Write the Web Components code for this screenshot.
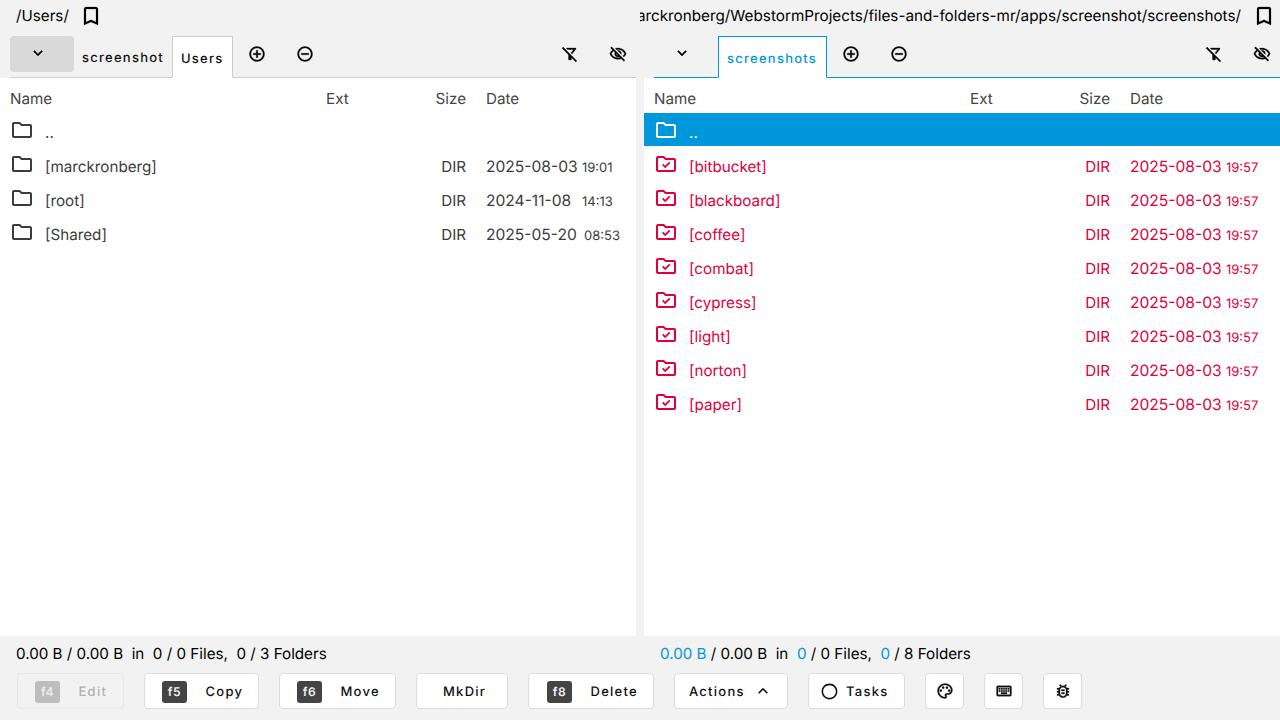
<!DOCTYPE html>
<html lang="en"><head><meta charset="utf-8"><title>Files and Folders</title>
<style>
html,body{margin:0;height:100%;overflow:hidden;background:#f2f2f2}
body{font:15.2px/24px Inter,"Liberation Sans",sans-serif;color:#000;text-rendering:geometricPrecision}
fm-app{--blue:#0098db;--red:#e0003c}
</style></head><body>
<fm-app>
  <fm-panel slot="left" side="left" path="/Users/">
    <fm-tab slot="tabs" plain>screenshot</fm-tab>
    <fm-tab slot="tabs" active>Users</fm-tab>
    <fm-row name=".." up></fm-row>
    <fm-row name="[marckronberg]" size="DIR" date="2025-08-03" time="19:01"></fm-row>
    <fm-row name="[root]" size="DIR" date="2024-11-08" time="14:13"></fm-row>
    <fm-row name="[Shared]" size="DIR" date="2025-05-20" time="08:53" tshift="2"></fm-row>
  </fm-panel>
  <fm-panel slot="right" side="right" focused path="/Users/marckronberg/WebstormProjects/files-and-folders-mr/apps/screenshot/screenshots/">
    <fm-tab slot="tabs" active focused>screenshots</fm-tab>
    <fm-row name=".." up selected></fm-row>
    <fm-row name="[bitbucket]" size="DIR" date="2025-08-03" time="19:57" marked></fm-row>
    <fm-row name="[blackboard]" size="DIR" date="2025-08-03" time="19:57" marked></fm-row>
    <fm-row name="[coffee]" size="DIR" date="2025-08-03" time="19:57" marked></fm-row>
    <fm-row name="[combat]" size="DIR" date="2025-08-03" time="19:57" marked></fm-row>
    <fm-row name="[cypress]" size="DIR" date="2025-08-03" time="19:57" marked></fm-row>
    <fm-row name="[light]" size="DIR" date="2025-08-03" time="19:57" marked></fm-row>
    <fm-row name="[norton]" size="DIR" date="2025-08-03" time="19:57" marked></fm-row>
    <fm-row name="[paper]" size="DIR" date="2025-08-03" time="19:57" marked></fm-row>
  </fm-panel>
  <fm-status slot="status-left" folders="3"></fm-status>
  <fm-status slot="status-right" folders="8" accent></fm-status>
  <fm-btn slot="buttons" key="f4" w="107" pad="17" disabled>Edit</fm-btn>
  <fm-btn slot="buttons" key="f5" w="115" pad="17">Copy</fm-btn>
  <fm-btn slot="buttons" key="f6" w="117" pad="17">Move</fm-btn>
  <fm-btn slot="buttons" w="92" pad="26">MkDir</fm-btn>
  <fm-btn slot="buttons" key="f8" w="126" pad="18">Delete</fm-btn>
  <fm-btn slot="buttons" w="114" pad="14" after="expand_less">Actions</fm-btn>
  <fm-btn slot="buttons" w="97" pad="10.5" before="circle">Tasks</fm-btn>
  <fm-btn slot="buttons" w="39" before="palette"></fm-btn>
  <fm-btn slot="buttons" w="39" before="keyboard"></fm-btn>
  <fm-btn slot="buttons" w="39" before="bug"></fm-btn>
</fm-app>
<script>
const ICONS={
 bookmark:'<path d="M17 3H7c-1.1 0-2 .9-2 2v16l7-3 7 3V5c0-1.1-.9-2-2-2zm0 15l-5-2.18L7 18V5h10v13z"/>',
 add:'<path d="M13 7h-2v4H7v2h4v4h2v-4h4v-2h-4V7zm-1-5C6.48 2 2 6.48 2 12s4.48 10 10 10 10-4.48 10-10S17.52 2 12 2zm0 18c-4.41 0-8-3.59-8-8s3.59-8 8-8 8 3.59 8 8-3.59 8-8 8z"/>',
 remove:'<path d="M7 11v2h10v-2H7zm5-9C6.48 2 2 6.48 2 12s4.48 10 10 10 10-4.48 10-10S17.52 2 12 2zm0 18c-4.41 0-8-3.59-8-8s3.59-8 8-8 8 3.59 8 8-3.59 8-8 8z"/>',
 expand_more:'<path d="M16.59 8.59 12 13.17 7.41 8.59 6 10l6 6 6-6z"/>',
 expand_less:'<path d="M12 8l-6 6 1.41 1.41L12 10.83l4.59 4.58L18 14z"/>',
 filter_off:'<path d="M16.95 6l-3.57 4.55 1.43 1.43c1.03-1.31 4.98-6.37 4.98-6.37C20.3 4.95 19.83 4 19 4H6.83l2 2h8.12zM2.81 2.81 1.39 4.22 10 13v6c0 .55.45 1 1 1h2c.55 0 1-.45 1-1v-2.17l5.78 5.78 1.41-1.41L2.81 2.81z"/>',
 eye_off:'<path d="M12 6c3.79 0 7.17 2.13 8.82 5.5-.59 1.22-1.42 2.27-2.41 3.12l1.41 1.41c1.39-1.23 2.49-2.77 3.18-4.53C21.27 7.11 17 4 12 4c-1.27 0-2.49.2-3.64.57l1.65 1.65C10.66 6.09 11.32 6 12 6zm-1.07 1.14L13 9.21c.57.25 1.03.71 1.28 1.28l2.07 2.07c.08-.34.14-.7.14-1.07C16.5 9.01 14.48 7 12 7c-.37 0-.72.05-1.07.14zM2.01 3.87l2.68 2.68C3.06 7.83 1.77 9.53 1 11.5 2.73 15.89 7 19 12 19c1.52 0 2.98-.29 4.32-.82l3.42 3.42 1.41-1.41L3.42 2.45 2.01 3.87zm7.5 7.5l2.61 2.61c-.04.01-.08.02-.12.02-1.38 0-2.5-1.12-2.5-2.5 0-.05.01-.08.01-.13zm-3.4-3.4l1.75 1.75c-.23.55-.36 1.15-.36 1.78 0 2.48 2.02 4.5 4.5 4.5.63 0 1.23-.13 1.77-.36l.98.98c-.88.24-1.8.38-2.75.38-3.79 0-7.17-2.13-8.82-5.5.7-1.43 1.72-2.61 2.93-3.53z"/>',
 folder:'<path d="M9.17 6l2 2H20v10H4V6h5.17M10 4H4c-1.1 0-1.99.9-1.99 2L2 18c0 1.1.9 2 2 2h16c1.1 0 2-.9 2-2V8c0-1.1-.9-2-2-2h-8l-2-2z"/>',
 folder_check:'<path d="M9.17 6l2 2H20v10H4V6h5.17M10 4H4c-1.1 0-1.99.9-1.99 2L2 18c0 1.1.9 2 2 2h16c1.1 0 2-.9 2-2V8c0-1.1-.9-2-2-2h-8l-2-2z"/><path d="M8 13.1l1.3-1.3 1.9 1.9 3.9-3.9 1.3 1.3-5.2 5.2z"/>',
 circle:'<path d="M12 2C6.48 2 2 6.48 2 12s4.48 10 10 10 10-4.48 10-10S17.52 2 12 2zm0 18c-4.42 0-8-3.58-8-8s3.58-8 8-8 8 3.58 8 8-3.58 8-8 8z"/>',
 palette:'<path d="M12 22C6.49 22 2 17.51 2 12S6.49 2 12 2s10 4.04 10 9c0 3.31-2.69 6-6 6h-1.77c-.28 0-.5.22-.5.5 0 .12.05.23.13.33.41.47.64 1.06.64 1.67 0 1.38-1.12 2.5-2.5 2.5zm0-18c-4.41 0-8 3.59-8 8s3.59 8 8 8c.28 0 .5-.22.5-.5 0-.16-.08-.28-.14-.35-.41-.46-.63-1.05-.63-1.65 0-1.38 1.12-2.5 2.5-2.5H16c2.21 0 4-1.79 4-4 0-3.86-3.59-7-8-7z"/><circle cx="6.5" cy="11.5" r="1.5"/><circle cx="9.5" cy="7.5" r="1.5"/><circle cx="14.5" cy="7.5" r="1.5"/><circle cx="17.5" cy="11.5" r="1.5"/>',
 keyboard:'<path d="M20 5H4c-1.1 0-1.99.9-1.99 2L2 17c0 1.1.9 2 2 2h16c1.1 0 2-.9 2-2V7c0-1.1-.9-2-2-2zm0 12H4V7h16v10zM11 8h2v2h-2zm0 3h2v2h-2zM8 8h2v2H8zm0 3h2v2H8zM5 11h2v2H5zm0-3h2v2H5zm3 6h8v2H8zm6-3h2v2h-2zm0-3h2v2h-2zm3 3h2v2h-2zm0-3h2v2h-2z"/>',
 bug:'<path d="M20 8h-2.81c-.45-.78-1.07-1.45-1.82-1.96L17 4.41 15.59 3l-2.17 2.17C12.96 5.06 12.49 5 12 5s-.96.06-1.41.17L8.41 3 7 4.41l1.62 1.63C7.88 6.55 7.26 7.22 6.81 8H4v2h2.09c-.05.33-.09.66-.09 1v1H4v2h2v1c0 .34.04.67.09 1H4v2h2.81c1.04 1.79 2.97 3 5.19 3s4.15-1.21 5.19-3H20v-2h-2.09c.05-.33.09-.66.09-1v-1h2v-2h-2v-1c0-.34-.04-.67-.09-1H20V8zm-4 4v3c0 .22-.03.47-.07.7l-.1.65-.37.65c-.72 1.24-2.04 2-3.46 2s-2.74-.77-3.46-2l-.37-.64-.1-.65C8.03 15.48 8 15.23 8 15v-4c0-.23.03-.48.07-.7l.1-.65.37-.65c.3-.52.72-.97 1.21-1.31l.57-.39.74-.18c.31-.08.63-.12.94-.12.32 0 .63.04.95.12l.68.16.61.42c.5.34.91.78 1.21 1.31l.38.65.1.65c.04.22.07.47.07.69v1zm-6 2h4v2h-4zm0-4h4v2h-4z"/>'
};
const svg=(n,s,w)=>`<svg part="icon" width="${s}" height="${s}" viewBox="0 0 24 24" fill="currentColor" ${w?`stroke="currentColor" stroke-width="${w}"`:''} style="display:block;flex:none">${ICONS[n]}</svg>`;
const esc=s=>String(s||'').replace(/&/g,'&amp;').replace(/</g,'&lt;');

class FmApp extends HTMLElement{
 constructor(){super();this.attachShadow({mode:'open'}).innerHTML=`<style>
 :host{display:flex;flex-direction:column;height:720px;width:1280px;overflow:hidden}
 .panels{flex:1;min-height:0;display:grid;grid-template-columns:640px 640px}
 .status{display:grid;grid-template-columns:640px 640px;height:37px;flex:none}
 .buttons{display:flex;gap:20px;padding:0 0 0 17px;height:47px;flex:none;box-sizing:border-box}
 </style>
 <div class="panels"><slot name="left"></slot><slot name="right"></slot></div>
 <div class="status"><slot name="status-left"></slot><slot name="status-right"></slot></div>
 <div class="buttons"><slot name="buttons"></slot></div>`;}
}
class FmPanel extends HTMLElement{
 constructor(){super();const r=this.attachShadow({mode:'open'});
  const right=this.getAttribute('side')==='right',f=this.hasAttribute('focused');
  r.innerHTML=`<style>
 :host{display:flex;flex-direction:column;min-width:0;min-height:0;overflow:hidden}
 .path{height:36px;flex:none;display:flex;align-items:flex-start;gap:${right?11:10}px;box-sizing:border-box;overflow:hidden;white-space:nowrap;
   padding:${right?'4px 4px 0 0':'4px 0 0 16px'};justify-content:${right?'flex-end':'flex-start'}}
 .path span{line-height:24px;flex:none;font-size:${right?'15.28px':'15.2px'}}
 .bar{height:42px;flex:none;box-sizing:border-box;display:flex;align-items:flex-start;
   margin-left:${right?'14px':'10px'};margin-right:${right?'0':'4px'};border-bottom:1px solid ${f?'var(--blue)':'#ccc'}}
 .dd{width:64px;height:36px;flex:none;display:flex;padding:8px 0 0 19px;box-sizing:border-box;border-radius:4px;${right?'':'background:#d9d9d9;'}}
 .tabs{display:flex;align-items:flex-start}
 .ib{width:48px;height:36px;flex:none;display:flex;align-items:center;justify-content:center}
 .sp{flex:1}
 .end{display:flex;margin-right:-6px}
 .list{flex:1;min-height:0;background:#fff;margin-${right?'left':'right'}:4px}
 </style>
 <div class="path"><span>${esc(this.getAttribute('path'))}</span>${svg('bookmark',24,.2)}</div>
 <div class="bar"><div class="dd">${svg('expand_more',18,.5)}</div><div class="tabs"><slot name="tabs"></slot></div>
  <div class="ib">${svg('add',18,.4)}</div><div class="ib">${svg('remove',18,.4)}</div><div class="sp"></div>
  <div class="end"><div class="ib">${svg('filter_off',18,.4)}</div><div class="ib">${svg('eye_off',18,.4)}</div></div></div>
 <div class="list"><fm-row header></fm-row><slot></slot></div>`;}
}
class FmTab extends HTMLElement{
 constructor(){super();const a=this.hasAttribute('active'),f=this.hasAttribute('focused');
  this.attachShadow({mode:'open'}).innerHTML=`<style>
 :host{display:block;height:42px;box-sizing:border-box;padding:10px ${f?'9px':'8px'} 0 8px;font:500 13px/24px Inter,sans-serif;letter-spacing:1.25px;white-space:nowrap;
  ${a?`background:#fff;border:1px solid ${f?'var(--blue)':'#ccc'};border-bottom-color:#fff;`:''}
  color:${f?'var(--blue)':'#111'}}
 </style><slot></slot>`;}
}
class FmRow extends HTMLElement{
 constructor(){super();const r=this.attachShadow({mode:'open'});
  const g=n=>this.getAttribute(n)||'';
  const hdr=this.hasAttribute('header'),sel=this.hasAttribute('selected'),m=this.hasAttribute('marked');
  const color=sel?'#fff':m?'var(--red)':'#3c3c3c';
  const common=`:host{display:grid;grid-template-columns:316px 100px 40px 170px;padding-left:10px;box-sizing:border-box;height:34px;color:${color};line-height:24px;white-space:nowrap}`;
  if(hdr){r.innerHTML=`<style>${common}
   div{padding-top:9px;color:#444}.s{text-align:right}.d{padding-left:20px}</style>
   <div>Name</div><div>Ext</div><div class="s">Size</div><div class="d">Date</div>`;return;}
  r.innerHTML=`<style>${common}
   :host{border-top:1px solid #fff;${sel?'background:var(--blue);':''}}
   .n{display:flex;gap:11px;padding-top:5px}.t{padding-top:3px}
   .s{text-align:right;padding-top:8px}.d{padding:8px 0 0 20px;display:flex}
   .dt{font-size:15.6px;width:96px;flex:none}
   small{font-size:13px;padding-top:1px;margin-left:${g('tshift')||0}px}</style>
   <div class="n">${svg(m?'folder_check':'folder',24)}<span class="t">${esc(g('name'))}</span></div><div></div>
   <div class="s">${esc(g('size'))}</div><div class="d">${g('date')?`<span class="dt">${esc(g('date'))}</span><small>${esc(g('time'))}</small>`:''}</div>`;}
}
class FmStatus extends HTMLElement{
 constructor(){super();const a=this.hasAttribute('accent');
  const z=s=>a?`<b>${s}</b>`:s;
  this.attachShadow({mode:'open'}).innerHTML=`<style>
 :host{display:block;padding:6px 0 0 ${a?'20px':'16px'};white-space:pre;line-height:24px}
 b{font-weight:400;color:var(--blue)}</style>${z('0.00 B')} / 0.00 B  in  ${z('0')} / 0 Files,  ${z('0')} / ${esc(this.getAttribute('folders'))} Folders`;}
}
class FmBtn extends HTMLElement{
 constructor(){super();const d=this.hasAttribute('disabled'),k=this.getAttribute('key'),b=this.getAttribute('before'),af=this.getAttribute('after'),p=this.getAttribute('pad');
  const ic=b==='circle'?svg(b,19):b?svg(b,18,.4):'';
  const hasLabel=this.textContent.trim()!=='';
  this.attachShadow({mode:'open'}).innerHTML=`<style>
 :host{display:flex;align-items:center;justify-content:${p?'flex-start':'center'};padding-left:${p||0}px;height:36px;width:${this.getAttribute('w')}px;box-sizing:border-box;
  background:${d?'transparent':'#fff'};border:1px solid ${d?'#e8e8e8':'#dcdcdc'};border-radius:4px;
  font:500 13px/20px Inter,sans-serif;letter-spacing:1.25px;color:${d?'#b0b0b0':'#111'};white-space:nowrap;gap:${k?'18.5px':b?'7.5px':'8px'}}
 .l{padding-top:1px;display:block}
 .k{width:25px;height:22px;margin-top:1px;border-radius:3px;background:${d?'#bdbdbd':'#444'};color:${d?'#eee':'#f0f0f0'};font:600 12px/22px Inter,sans-serif;letter-spacing:.6px;text-align:center;flex:none}
 </style>${k?`<span class="k">${k}</span>`:''}${ic}${hasLabel?'<span class="l"><slot></slot></span>':''}${af?svg(af,20):''}`;}
}
customElements.define('fm-row',FmRow);
customElements.define('fm-tab',FmTab);
customElements.define('fm-panel',FmPanel);
customElements.define('fm-status',FmStatus);
customElements.define('fm-btn',FmBtn);
customElements.define('fm-app',FmApp);
</script>
</body></html>
